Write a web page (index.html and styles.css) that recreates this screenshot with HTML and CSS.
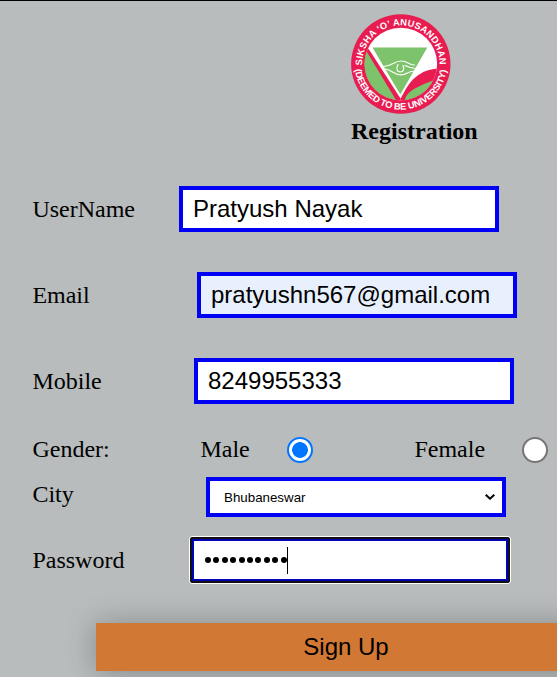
FILE: index.html
```html
<!DOCTYPE html>
<html lang="en">
<head>
<meta charset="utf-8">
<title>Registration</title>
<link rel="stylesheet" href="styles.css">
</head>
<body>
<form class="form">
  <header class="header">
    <svg class="logo" viewBox="0 0 100 100" role="img" aria-label="Siksha 'O' Anusandhan">
      <defs>
        <path id="top-arc" d="M11.100 51.500L11.100 50A38.700 38.700 0 0 1 88.500 50L88.500 52"/>
        <path id="bottom-arc" d="M4 55.500A46.200 46.200 0 0 0 95.600 55.500"/>
        <clipPath id="inner"><circle cx="49.800" cy="50" r="36.300"/></clipPath>
      </defs>
      <circle cx="49.800" cy="50" r="49.700" fill="#e91c52"/>
      <circle cx="49.800" cy="50" r="36.300" fill="#fff"/>
      <g clip-path="url(#inner)">
        <path d="M10 26L18.700 36.500L49.500 84.500V92H10Z" fill="#e91c52"/>
        <path d="M10 28L16.500 39L45 86V90H10Z" fill="#7dc36c"/>
        <path d="M49.500 85C56 72 65 54 91 54.500V92H49.500Z" fill="#e91c52"/>
        <path d="M54 85C56 77 68 72 82 66.500C79 76 67 86 54 86Z" fill="#7dc36c"/>
      </g>
      <path d="M21.500 33.500H76.300L49.300 80.500Z" fill="#7dc36c"/>
      <g fill="none" stroke="#fff" stroke-width="1.200" stroke-linecap="round">
        <path d="M32.500 52.500C41 52.500 43 47 50 47S57 51 63.500 51"/>
        <path d="M34.500 55C41 56 43 60.800 50 60.800S56 57 64 57"/>
        <path d="M54 51.500C58 53.500 60 54.500 65 54.500"/>
        <path d="M47 50.500C44.800 55 46 58 49.300 58S53.500 55 52 51.500"/>
      </g>
      <text class="seal-text"><textPath href="#top-arc" textLength="123.500">SIKSHA ‘O’ ANUSANDHAN</textPath></text>
      <text class="seal-text"><textPath href="#bottom-arc" textLength="132">(DEEMED TO BE UNIVERSITY)</textPath></text>
    </svg>
    <h1 class="title">Registration</h1>
  </header>

  <div class="row row-text">
    <label class="label label-username" for="username">UserName</label>
    <input class="field" id="username" type="text" value="Pratyush Nayak">
  </div>
  <div class="row row-text">
    <label class="label label-email" for="email">Email</label>
    <input class="field field-autofill" id="email" type="text" value="pratyushn567@gmail.com">
  </div>
  <div class="row row-text">
    <label class="label label-mobile" for="mobile">Mobile</label>
    <input class="field" id="mobile" type="text" value="8249955333">
  </div>
  <div class="row row-gender">
    <span class="label label-gender">Gender:</span>
    <label class="option option-male" for="male">Male</label>
    <input class="radio" id="male" type="radio" name="gender" checked>
    <label class="option option-female" for="female">Female</label>
    <input class="radio" id="female" type="radio" name="gender">
  </div>
  <div class="row row-city">
    <label class="label label-city" for="city">City</label>
    <div class="select" id="city">
      <span>Bhubaneswar</span>
      <svg class="chevron" viewBox="0 0 10 6"><path d="M0.700 0.800L5 4.700L9.300 0.800"/></svg>
    </div>
  </div>
  <div class="row row-password">
    <span class="label label-password">Password</span>
    <div class="field field-focused">
      <span class="dots"><i></i><i></i><i></i><i></i><i></i><i></i><i></i><i></i><i></i><i></i></span>
      <span class="caret"></span>
    </div>
  </div>
  <button class="submit" type="button">Sign Up</button>
</form>
</body>
</html>
```
FILE: styles.css
```css
* { box-sizing: border-box; }

html { overflow: hidden; }

body {
  margin: 0;
  height: 677px;
  overflow: hidden;
  background: #b8bcbc;
  color: #000;
  font: 24px/28px "Liberation Serif", "Times New Roman", serif;
}

.form {
  height: 677px;
  border-top: 1px solid #000;
  padding: 13px 0 0 32px;
}

.header {
  height: 172px;
  padding-left: 319px;
}

.logo { display: block; width: 100px; height: 100px; }

.seal-text {
  fill: #fff;
  font: bold 9.3px "Liberation Sans", Arial, sans-serif;
}

.title {
  margin: 3px 0 0;
  font-size: 24px;
  line-height: 28px;
}

.row { display: flex; align-items: center; }
.row-text { height: 46px; margin-bottom: 40px; }
.label { flex: none; padding-left: .4px; }
.label-username { width: 147px; }
.label-email { width: 165px; }
.label-mobile { width: 162px; }
.label-gender { width: 168.4px; }
.label-city { width: 174px; }
.label-password { width: 158px; }

.field {
  flex: none;
  width: 320px;
  height: 46px;
  border: 4px solid #0000f5;
  padding: 0 10px;
  background: #fff;
  color: #000;
  font: 24px "Liberation Sans", Arial, sans-serif;
}

.field-autofill { background: #e8f0fe; }

.row-gender { height: 28px; margin-top: -9px; }
.option { flex: none; }
.option-male { width: 87px; }
.option-female { width: 108px; margin-left: 101px; }

.radio {
  flex: none;
  appearance: none;
  width: 26px;
  height: 26px;
  margin: 2px 0 0;
  border: 2px solid #767676;
  border-radius: 50%;
  background: #fff;
}

.radio:checked {
  border-color: #0075ff;
  background: radial-gradient(circle, #0075ff 7.5px, #fff 8.2px);
}

.row-city { height: 40px; margin-top: 14px; }
.label-city { margin-top: -7px; }

.select {
  display: flex;
  align-items: center;
  justify-content: space-between;
  width: 300px;
  height: 40px;
  border: 4px solid #0000f5;
  padding: 0 7px 0 14px;
  background: #fff;
  font: 13.333px "Liberation Sans", Arial, sans-serif;
}

.chevron {
  width: 10px;
  height: 6px;
  fill: none;
  stroke: #000;
  stroke-width: 2;
}

.row-password { height: 46px; margin-top: 20px; }

.field-focused {
  display: flex;
  align-items: center;
  border-color: #0000b4;
  outline: 2px solid #101010;
  outline-offset: -2px;
  border-radius: 3px;
  box-shadow: 0 0 0 1px #fff;
}

.dots { display: flex; gap: 2.4px; padding-left: 1px; }
.dots i { width: 6px; height: 6px; border-radius: 50%; background: #000; }
.caret { width: 1px; height: 27px; background: #000; }

.submit {
  display: block;
  width: 500px;
  height: 48px;
  margin: 40px 0 0 64px;
  border: 0;
  padding: 0;
  background: #d27835;
  color: #000;
  font: 24px "Liberation Sans", Arial, sans-serif;
  box-shadow: 0 1px 30px rgba(0, 0, 0, .28);
}
```
